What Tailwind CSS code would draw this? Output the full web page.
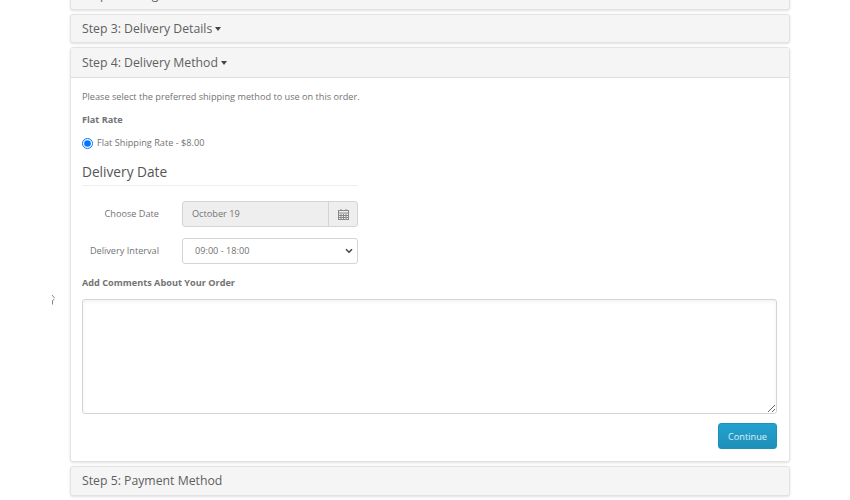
<!DOCTYPE html>
<html lang="en">
<head>
    <title>Checkout</title>
    <meta charset="UTF-8">
    <script src="https://cdn.jsdelivr.net/npm/@tailwindcss/browser@4"></script>
</head>
<body class="bg-white font-['Open_Sans',sans-serif] text-[#666]">
    <div class="relative h-[500px] overflow-hidden">
        <!-- stray mark left of the panels -->
        <svg class="absolute left-[50px] top-[294px]" width="6" height="12" viewBox="0 0 6 12" fill="none" stroke="#777" stroke-width="0.9"><path d="M2 1l2.5 3M4.5 5L2.5 6.5v4"/></svg>

        <div class="ml-[70px] w-[720px] -mt-[20px] flex flex-col gap-[4px]">
            <div class="h-[30px] rounded-[3px] border border-[#e3e3e3] bg-[#f5f5f5] shadow-sm px-[11px] flex items-center text-[12.25px] text-[#5f5f5f]">Step 2: Billing Details</div>

            <div class="h-[29px] pt-px rounded-[3px] border border-[#e3e3e3] bg-[#f5f5f5] shadow-sm px-[11px] flex items-center gap-[3px] text-[12.25px] text-[#5f5f5f]">
                Step 3: Delivery Details
                <span class="w-0 h-0 border-x-[3px] border-t-[4px] border-x-transparent border-t-[#444]"></span>
            </div>

            <div class="h-[415px] rounded-[3px] border border-[#e3e3e3] shadow-sm flex flex-col">
                <div class="h-[30px] pt-px shrink-0 border-b border-[#ddd] bg-[#f5f5f5] px-[11px] flex items-center gap-[3px] text-[12.25px] text-[#5f5f5f]">
                    Step 4: Delivery Method
                    <span class="w-0 h-0 border-x-[3px] border-t-[4px] border-x-transparent border-t-[#444]"></span>
                </div>
                <div class="pl-[11px] pr-[12px] pt-[12px] flex flex-col text-[9.17px] text-[#737373]">
                    <p class="leading-[14px]">Please select the preferred shipping method to use on this order.</p>
                    <p class="mt-[9px] leading-[14px] font-bold">Flat Rate</p>
                    <label class="mt-[9px] h-[14px] flex items-center gap-[4px]">
                        <input type="radio" checked class="w-[11px] h-[11px] accent-[#0075ff]">
                        Flat Shipping Rate - $8.00
                    </label>

                    <div class="w-[276px]">
                        <h3 class="mt-[10px] pb-[1px] border-b border-[#eee] text-[13.7px] leading-[24px] text-[#555]">Delivery Date</h3>
                        <div class="mt-[15px] flex items-center h-[26px]">
                            <span class="w-[77px] text-right">Choose Date</span>
                            <div class="ml-[23px] flex-1 h-[26px] flex rounded-[3px] border border-[#d4d4d4] bg-[#eee]">
                                <span class="flex-1 flex items-center pl-[9px]">October 19</span>
                                <span class="w-[29px] flex items-center justify-center border-l border-[#d4d4d4]">
                                    <svg width="11" height="11" viewBox="0 0 11 11" fill="none" stroke="#888" stroke-width="1"><rect x="0.5" y="1.5" width="10" height="9"/><path d="M0.5 4h10M3 5v5M5.5 5v5M8 5v5M1 6.5h9M1 8.5h9M3 0v2M8 0v2"/></svg>
                                </span>
                            </div>
                        </div>
                        <div class="mt-[11px] flex items-center h-[26px]">
                            <span class="w-[77px] text-right">Delivery Interval</span>
                            <div class="ml-[23px] flex-1 h-[26px] flex items-center justify-between rounded-[3px] border border-[#d4d4d4] bg-white pl-[12px] pr-[4px]">
                                09:00 - 18:00
                                <svg width="8" height="6" viewBox="0 0 8 6" fill="none" stroke="#444" stroke-width="1.5"><path d="M1 1.2l3 3 3-3"/></svg>
                            </div>
                        </div>
                    </div>

                    <p class="mt-[12px] leading-[14px] font-bold">Add Comments About Your Order</p>
                    <textarea class="mt-[9px] h-[115px] w-full rounded-[3px] border border-[#d4d4d4] bg-white shadow-inner"></textarea>
                    <div class="mt-[9px] flex justify-end">
                        <button class="w-[59px] h-[26px] pt-px rounded-[3px] border border-[#1f90b8] bg-gradient-to-b from-[#23a1d1] to-[#1f90b8] text-[9.17px] text-white/85">Continue</button>
                    </div>
                </div>
            </div>

            <div class="h-[30px] rounded-[3px] border border-[#e3e3e3] bg-[#f5f5f5] shadow-sm px-[11px] flex items-center text-[12.25px] text-[#5f5f5f]">Step 5: Payment Method</div>
        </div>
    </div>
</body>
</html>
